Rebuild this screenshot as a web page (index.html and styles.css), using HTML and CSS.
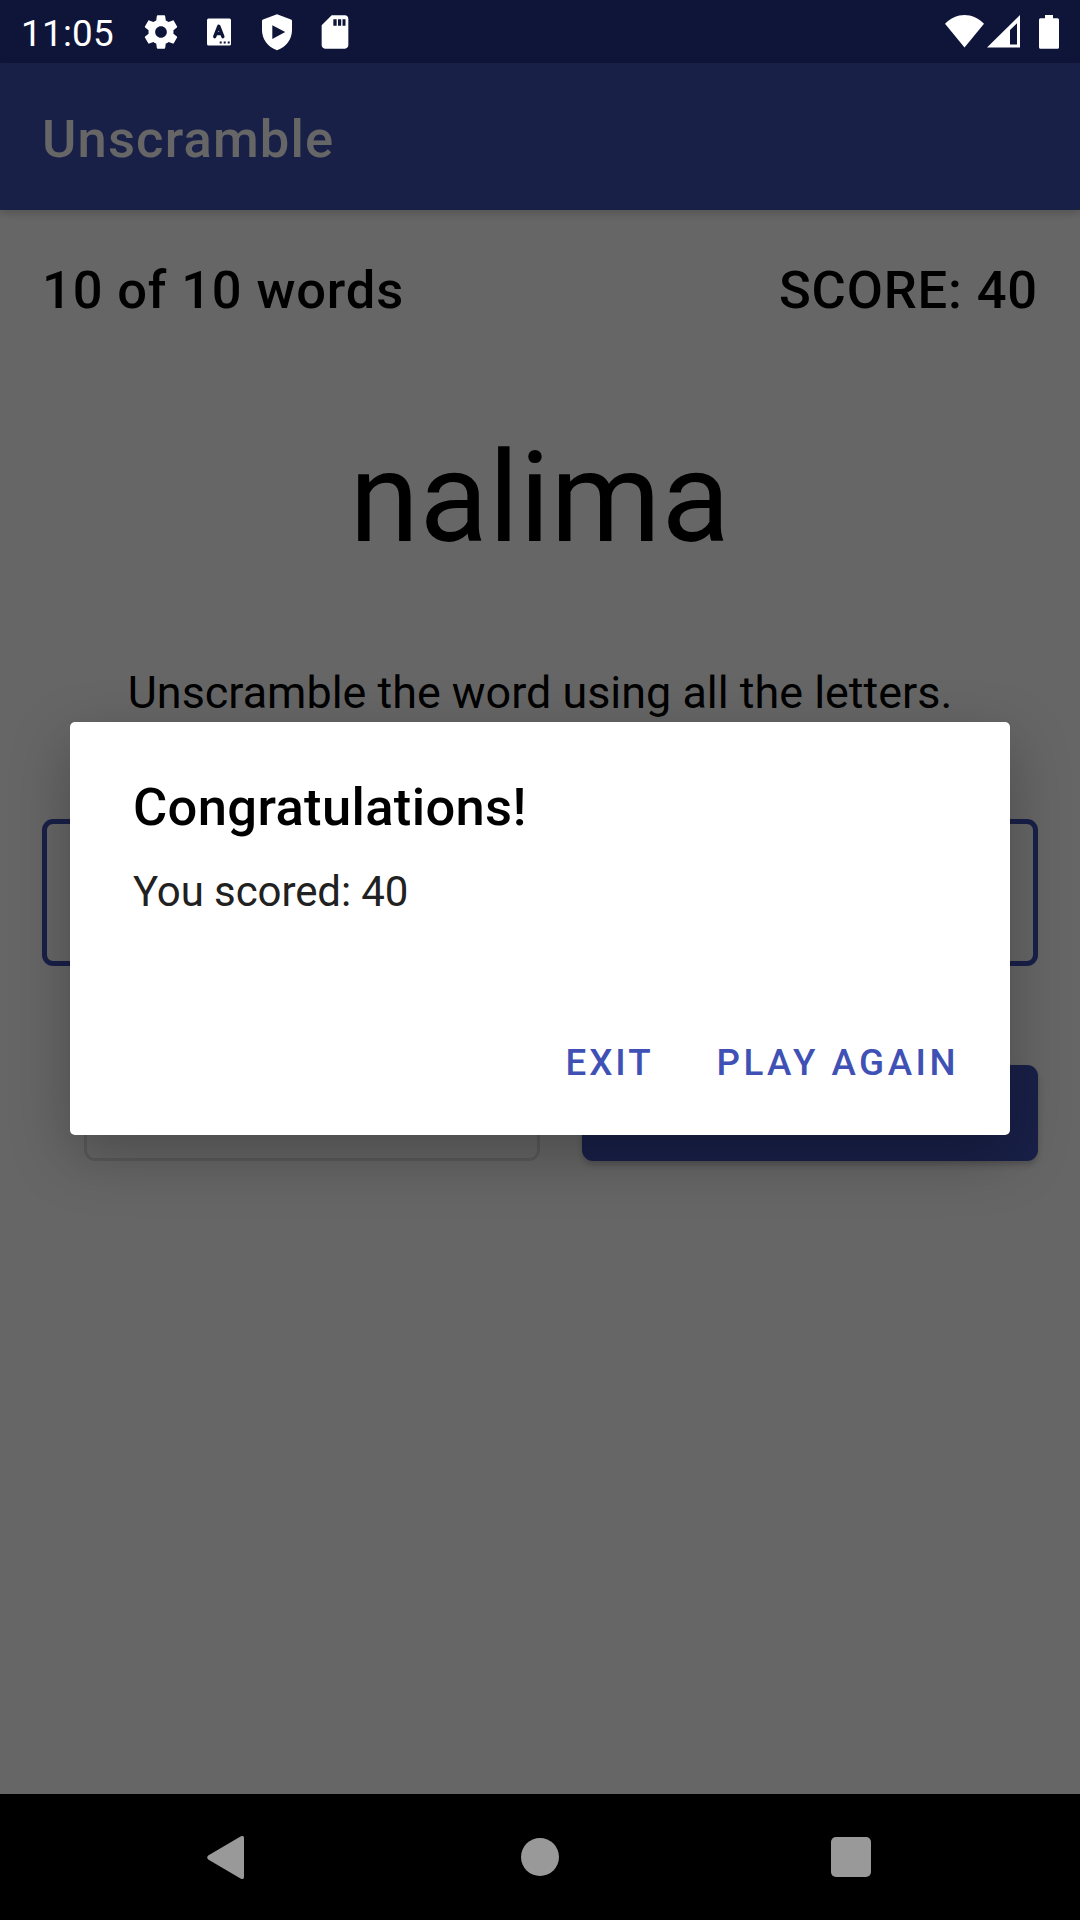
FILE: index.html
```html
<!DOCTYPE html>
<html lang="en">
<head>
<meta charset="utf-8">
<title>Unscramble</title>
<link rel="stylesheet" href="styles.css">
</head>
<body>
<div class="screen">
  <header class="status-bar">
    <span class="clock">11:05</span>
    <div class="notifications">
      <svg class="icon" viewBox="0 0 24 24"><path d="M19.43 12.98c.04-.32.07-.64.07-.98s-.03-.66-.07-.98l2.11-1.65c.19-.15.24-.42.12-.64l-2-3.46c-.12-.22-.39-.3-.61-.22l-2.49 1c-.52-.4-1.08-.73-1.69-.98l-.38-2.65C14.46 2.18 14.25 2 14 2h-4c-.25 0-.46.18-.49.42l-.38 2.65c-.61.25-1.17.59-1.69.98l-2.49-1c-.23-.09-.49 0-.61.22l-2 3.46c-.13.22-.07.49.12.64l2.11 1.65c-.04.32-.07.65-.07.98s.03.66.07.98l-2.11 1.65c-.19.15-.24.42-.12.64l2 3.46c.12.22.39.3.61.22l2.49-1c.52.4 1.08.73 1.69.98l.38 2.65c.03.24.24.42.49.42h4c.25 0 .46-.18.49-.42l.38-2.65c.61-.25 1.17-.59 1.69-.98l2.49 1c.23.09.49 0 .61-.22l2-3.46c.12-.22.07-.49-.12-.64l-2.11-1.65zM12 15.500c-1.93 0-3.500-1.57-3.500-3.500s1.570-3.500 3.500-3.500 3.500 1.570 3.500 3.500-1.570 3.500-3.500 3.500z"/></svg>
      <svg class="icon" viewBox="0 0 40 40">
        <rect x="8" y="6.500" width="24" height="27" rx="1.500"/>
        <path class="cutout-line" d="M15.700 24.700L19.800 14.200L23.900 24.700M17 21.700H22.600"/>
        <path class="cutout" d="M20.700 29.600h2v2h-2zM24.700 29.600h2v2h-2zM28.700 29.600h2v2h-2z"/>
      </svg>
      <svg class="icon" viewBox="0 0 40 40">
        <path d="M20 2.200L34 7.500Q35 7.900 35 9V18C35 27 29.500 35 20 38.200C10.500 35 5 27 5 18V9Q5 7.900 6 7.500Z"/>
        <path class="cutout" d="M15.300 13.300L28.200 20.100L15.300 26.900Z"/>
      </svg>
      <svg class="icon" viewBox="0 0 24 24"><path d="M18 2h-8L4 8v12c0 1.100.9 2 2 2h12c1.100 0 2-.9 2-2V4c0-1.100-.9-2-2-2zm-5 6.200h-2V4.400h2v3.800zm2.700 0h-1.900V4.400h1.900v3.800zm2.600 0h-1.800V4.400h1.800v3.800z"/></svg>
    </div>
    <div class="system">
      <svg class="wifi" viewBox="0 0 39 33"><path d="M0 8.800C11-2.800 28-2.800 39 8.800L19.500 32.500Z"/></svg>
      <svg class="signal" viewBox="0 0 33 33"><path fill-rule="evenodd" d="M33 0V32.500H0ZM30 8.200L23 15V29.500H30Z"/></svg>
      <svg class="battery" viewBox="0 0 20 34"><path d="M6 0h8v3.200h4.500q1.500 0 1.500 1.500v27.600q0 1.500-1.500 1.500h-17q-1.500 0-1.500-1.500v-27.600q0-1.500 1.500-1.500h4.500z"/></svg>
    </div>
  </header>

  <div class="app">
    <div class="app-bar"><h1 class="app-title">Unscramble</h1></div>
    <main class="game">
      <div class="progress"><span>10 of 10 words</span><span class="score">SCORE: 40</span></div>
      <div class="word">nalima</div>
      <p class="instructions">Unscramble the word using all the letters.</p>
      <div class="field"></div>
      <div class="actions">
        <div class="button outlined"></div>
        <div class="button filled"></div>
      </div>
    </main>
    <div class="scrim"></div>
    <section class="dialog" role="dialog">
      <h2 class="dialog-title">Congratulations!</h2>
      <p class="dialog-message">You scored: 40</p>
      <div class="dialog-actions"><span class="exit">EXIT</span><span class="again">PLAY AGAIN</span></div>
    </section>
  </div>

  <nav class="nav-bar">
    <svg class="back" viewBox="0 0 37 43"><path d="M33.500.600Q37-1.500 37 2.500V40.500Q37 44.500 33.500 42.400L1.200 23.500Q-.8 21.500 1.200 19.500Z"/></svg>
    <span class="home"></span>
    <span class="recents"></span>
  </nav>
</div>
</body>
</html>
```
FILE: styles.css
```css
* { box-sizing: border-box; }

body {
  margin: 0;
  font-family: Roboto, sans-serif;
  color: #000;
}

h1, h2, p { margin: 0; font-weight: 400; }
svg { display: block; fill: #fff; }

.screen {
  width: 1080px;
  height: 1920px;
  display: flex;
  flex-direction: column;
  overflow: hidden;
}

/* Status bar */
.status-bar {
  height: 63px;
  flex: none;
  display: flex;
  align-items: center;
  padding: 0 21px 0 21px;
  background: #0f1439;
}
.clock {
  width: 120px;
  padding-top: 3px;
  font-size: 36.75px;
  line-height: 43px;
  letter-spacing: 0.3px;
  color: #fff;
}
.notifications { display: flex; gap: 18px; }
.icon { width: 40px; height: 40px; }
.cutout { fill: #0f1439; }
.cutout-line {
  fill: none;
  stroke: #0f1439;
  stroke-width: 3.3;
  stroke-linecap: round;
  stroke-linejoin: round;
}
.system { display: flex; align-items: flex-start; margin-left: auto; }
.wifi { width: 39px; height: 33px; }
.signal { width: 33px; height: 33px; margin: 0 19px 0 3px; }
.battery { width: 20px; height: 34px; }

/* Game */
.app {
  position: relative;
  flex: 1;
  background: #fff;
}
.app-bar {
  position: relative;
  height: 147px;
  padding: 45px 42px 0;
  background: #3f51b5;
  box-shadow: 0 3px 9px rgba(0, 0, 0, 0.2);
}
.app-title {
  font-size: 52.5px;
  line-height: 62px;
  font-weight: 500;
  letter-spacing: 1.17px;
  color: #fff;
}
.game {
  display: flex;
  flex-direction: column;
  padding: 49px 42px 0;
}
.progress {
  display: flex;
  justify-content: space-between;
  font-size: 52.5px;
  line-height: 62px;
  font-weight: 500;
  letter-spacing: 0.84px;
}
.word {
  margin-top: 103px;
  font-size: 126px;
  line-height: 148px;
  letter-spacing: 0.4px;
  text-align: center;
}
.instructions {
  margin-top: 94px;
  font-size: 44.9px;
  line-height: 53px;
  text-align: center;
}
.field {
  height: 147px;
  margin-top: 100px;
  border: 5px solid #3f51b5;
  border-radius: 11px;
}
.actions {
  display: grid;
  grid-template-columns: 1fr 1fr;
  gap: 42px;
  margin: 99px 0 0 42px;
}
.button { height: 96px; border-radius: 11px; }
.outlined { border: 3px solid #e0e0e0; }
.filled { background: #3f51b5; box-shadow: 0 4px 6px rgba(0, 0, 0, 0.2); }

/* Dialog */
.scrim {
  position: absolute;
  inset: 0;
  background: rgba(0, 0, 0, 0.6);
}
.dialog {
  position: absolute;
  left: 70px;
  top: 659px;
  width: 940px;
  height: 413px;
  padding: 54px 51px 0 63px;
  background: #fff;
  border-radius: 5px;
  box-shadow: 0 20px 60px rgba(0, 0, 0, 0.27);
}
.dialog-title {
  font-size: 52.5px;
  line-height: 62px;
  font-weight: 500;
  letter-spacing: 0.35px;
}
.dialog-message {
  margin-top: 29px;
  font-size: 42px;
  line-height: 50px;
  letter-spacing: -0.09px;
  color: #212121;
}
.dialog-actions {
  display: flex;
  justify-content: flex-end;
  gap: 63px;
  margin-top: 124px;
  font-size: 36.75px;
  line-height: 44px;
  font-weight: 500;
  color: #3f51b5;
}
.exit { letter-spacing: 2.9px; }
.again { letter-spacing: 3.5px; }

/* Navigation bar */
.nav-bar {
  height: 126px;
  flex: none;
  display: flex;
  align-items: center;
  padding-left: 207px;
  background: #000;
}
.back { width: 37px; height: 43px; fill: #999; }
.home { width: 38px; height: 38px; margin: 0 272px 0 277px; border-radius: 50%; background: #999; }
.recents { width: 40px; height: 40px; border-radius: 5px; background: #999; }
```
